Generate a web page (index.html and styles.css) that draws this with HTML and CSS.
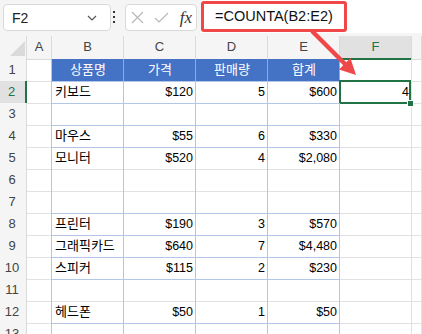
FILE: index.html
```html
<!DOCTYPE html>
<html lang="ko">
<head>
    <meta charset="UTF-8">
    <meta name="viewport" content="width=device-width, initial-scale=1.0">
    <title>COUNTA</title>
    <link rel="stylesheet" href="styles.css">
</head>
<body>
    <!-- Name box + formula bar -->
    <div class="toolbar">
        <div class="namebox">
            <span>F2</span>
            <svg width="10" height="6" viewBox="0 0 10 6"><path d="M1 1 L5 5 L9 1" fill="none" stroke="#555" stroke-width="1.2"/></svg>
        </div>
        <div class="dots"><i></i><i></i><i></i></div>
        <div class="fxbox">
            <svg width="13" height="13" viewBox="0 0 13 13"><path d="M1 1 L12 12 M12 1 L1 12" stroke="#b8b8b8" stroke-width="1.2"/></svg>
            <svg width="15" height="11" viewBox="0 0 15 11"><path d="M1 6 L5 10 L14 1" fill="none" stroke="#b8b8b8" stroke-width="1.2"/></svg>
            <span class="fx">fx</span>
        </div>
        <div class="formula">
            <div class="formula-box">=COUNTA(B2:E2)</div>
        </div>
    </div>

    <!-- Column headers -->
    <div class="row colhead">
        <div class="corner"><span class="tri"></span></div>
        <div>A</div><div>B</div><div>C</div><div>D</div><div>E</div>
        <div class="colsel">F</div><div></div>
    </div>

    <!-- Sheet -->
    <div class="row">
        <div class="rh">1</div><div class="c edge"></div>
        <div class="c hd">상품명</div><div class="c hd">가격</div><div class="c hd">판매량</div><div class="c hd">합계</div>
        <div class="c"></div><div class="c"></div>
    </div>
    <div class="row">
        <div class="rh rowsel">2</div><div class="c edge"></div>
        <div class="c t bb">키보드</div><div class="c t bb num">$120</div><div class="c t bb num">5</div><div class="c t bb num">$600</div>
        <div class="c num active">4<span class="handle"></span></div><div class="c"></div>
    </div>
    <div class="row">
        <div class="rh">3</div><div class="c edge"></div>
        <div class="c t bb"></div><div class="c t bb"></div><div class="c t bb"></div><div class="c t bb"></div>
        <div class="c"></div><div class="c"></div>
    </div>
    <div class="row">
        <div class="rh">4</div><div class="c edge"></div>
        <div class="c t bb">마우스</div><div class="c t bb num">$55</div><div class="c t bb num">6</div><div class="c t bb num">$330</div>
        <div class="c"></div><div class="c"></div>
    </div>
    <div class="row">
        <div class="rh">5</div><div class="c edge"></div>
        <div class="c t">모니터</div><div class="c t num">$520</div><div class="c t num">4</div><div class="c t num">$2,080</div>
        <div class="c"></div><div class="c"></div>
    </div>
    <div class="row">
        <div class="rh">6</div><div class="c edge"></div>
        <div class="c t"></div><div class="c t"></div><div class="c t"></div><div class="c t"></div>
        <div class="c"></div><div class="c"></div>
    </div>
    <div class="row">
        <div class="rh">7</div><div class="c edge"></div>
        <div class="c t bb"></div><div class="c t bb"></div><div class="c t bb"></div><div class="c t bb"></div>
        <div class="c"></div><div class="c"></div>
    </div>
    <div class="row">
        <div class="rh">8</div><div class="c edge"></div>
        <div class="c t bb">프린터</div><div class="c t bb num">$190</div><div class="c t bb num">3</div><div class="c t bb num">$570</div>
        <div class="c"></div><div class="c"></div>
    </div>
    <div class="row">
        <div class="rh">9</div><div class="c edge"></div>
        <div class="c t bb">그래픽카드</div><div class="c t bb num">$640</div><div class="c t bb num">7</div><div class="c t bb num">$4,480</div>
        <div class="c"></div><div class="c"></div>
    </div>
    <div class="row">
        <div class="rh">10</div><div class="c edge"></div>
        <div class="c t bb">스피커</div><div class="c t bb num">$115</div><div class="c t bb num">2</div><div class="c t bb num">$230</div>
        <div class="c"></div><div class="c"></div>
    </div>
    <div class="row">
        <div class="rh">11</div><div class="c edge"></div>
        <div class="c t"></div><div class="c t"></div><div class="c t"></div><div class="c t"></div>
        <div class="c"></div><div class="c"></div>
    </div>
    <div class="row">
        <div class="rh">12</div><div class="c edge"></div>
        <div class="c t bb">헤드폰</div><div class="c t bb num">$50</div><div class="c t bb num">1</div><div class="c t bb num">$50</div>
        <div class="c"></div><div class="c"></div>
    </div>
    <div class="row">
        <div class="rh">13</div><div class="c edge"></div>
        <div class="c t"></div><div class="c t"></div><div class="c t"></div><div class="c t"></div>
        <div class="c"></div><div class="c"></div>
    </div>

    <!-- Callout arrow -->
    <svg class="arrow" width="422" height="334" viewBox="0 0 422 334">
        <line x1="312" y1="31" x2="347" y2="66" stroke="#f04848" stroke-width="4.5"/>
        <polygon points="356,75 350.4,58 339,69.4" fill="#f04848"/>
    </svg>
</body>
</html>
```

FILE: styles.css
```css
body {
    margin: 0;
    width: 422px;
    height: 334px;
    overflow: hidden;
    position: relative;
    background-color: #FFFFFF;
    font-family: "Liberation Sans", "Noto Sans CJK KR", sans-serif;
    color: #000000;
}
.toolbar {
    display: flex;
    align-items: flex-start;
    height: 36px;
    background-color: #F5F5F5;
}
.namebox {
    box-sizing: border-box;
    width: 108px;
    height: 27px;
    margin: 4px 0 0 3px;
    padding: 0 13px 0 8px;
    display: flex;
    align-items: center;
    justify-content: space-between;
    background-color: #FFFFFF;
    border: 1px solid #D9D9D9;
    border-radius: 4px;
    font-size: 14px;
    color: #222222;
}
.dots {
    display: flex;
    flex-direction: column;
    gap: 3px;
    margin: 11px 10px 0 2px;
}
.dots i {
    display: block;
    width: 2px;
    height: 2px;
    background-color: #333333;
}
.fxbox {
    box-sizing: border-box;
    width: 72px;
    height: 27px;
    margin-top: 4px;
    padding: 0 4px 0 5px;
    display: flex;
    align-items: center;
    justify-content: space-between;
    background-color: #FFFFFF;
    border: 1px solid #D9D9D9;
    border-radius: 4px;
}
.fx {
    font-family: "Liberation Serif", serif;
    font-style: italic;
    font-size: 17px;
    color: #333333;
}
.formula {
    flex: 1;
    height: 33px;
    margin-left: 4px;
    background-color: #FFFFFF;
}
.formula-box {
    box-sizing: border-box;
    width: 146px;
    height: 31px;
    margin-top: 1px;
    padding-left: 11px;
    border: 3px solid #F04848;
    border-radius: 3px;
    font-size: 14.5px;
    line-height: 25px;
    color: #111111;
}

/* grid */
.row {
    display: grid;
    grid-template-columns: 27px 25px repeat(5, 72px) 1fr;
    height: 22px;
}
.row > div {
    box-sizing: border-box;
    position: relative;
}
.colhead {
    height: 23px;
    background-color: #F5F5F5;
}
.colhead > div {
    border-right: 1px solid #DADADA;
    border-bottom: 1px solid #DADADA;
    text-align: center;
    font-size: 13px;
    line-height: 22px;
    color: #444444;
}
.colhead .colsel {
    background-color: #E1E1E1;
    color: #217346;
    border-bottom: 2px solid #217346;
}
.corner {
    display: flex;
    justify-content: flex-end;
    align-items: flex-end;
    padding: 0 1px 3px 0;
}
.tri {
    width: 15px;
    height: 15px;
    background-color: #DADADA;
    clip-path: polygon(100% 0, 100% 100%, 0 100%);
}
.rh {
    background-color: #F5F5F5;
    border-right: 1px solid #DADADA;
    border-bottom: 1px solid #E1E1E1;
    padding-right: 2px;
    text-align: center;
    font-size: 13px;
    line-height: 22px;
    color: #444444;
}
.rh.rowsel {
    background-color: #E1E1E1;
    color: #217346;
    border-right: 2px solid #217346;
}
.c {
    border-right: 1px solid #E1E1E1;
    border-bottom: 1px solid #E1E1E1;
    padding: 0 2px 0 3px;
    font-size: 13px;
    line-height: 22px;
    white-space: nowrap;
}
.c.edge,
.c.t {
    border-right-color: #B4C6E7;
}
.c.bb {
    border-bottom-color: #B4C6E7;
}
.c.hd {
    background-color: #4472C4;
    color: #FFFFFF;
    text-align: center;
    border-right-color: #8EA9DB;
    border-bottom-color: #B4C6E7;
}
.num {
    text-align: right;
    font-size: 12.5px;
}
.active::after {
    content: "";
    position: absolute;
    left: -1px;
    top: -1px;
    right: 0;
    bottom: -1px;
    border: 2px solid #217346;
}
.handle {
    position: absolute;
    right: -3px;
    bottom: -4px;
    width: 5px;
    height: 5px;
    background-color: #217346;
    border: 1px solid #FFFFFF;
    z-index: 1;
}
.arrow {
    position: absolute;
    left: 0;
    top: 0;
    pointer-events: none;
}
```
